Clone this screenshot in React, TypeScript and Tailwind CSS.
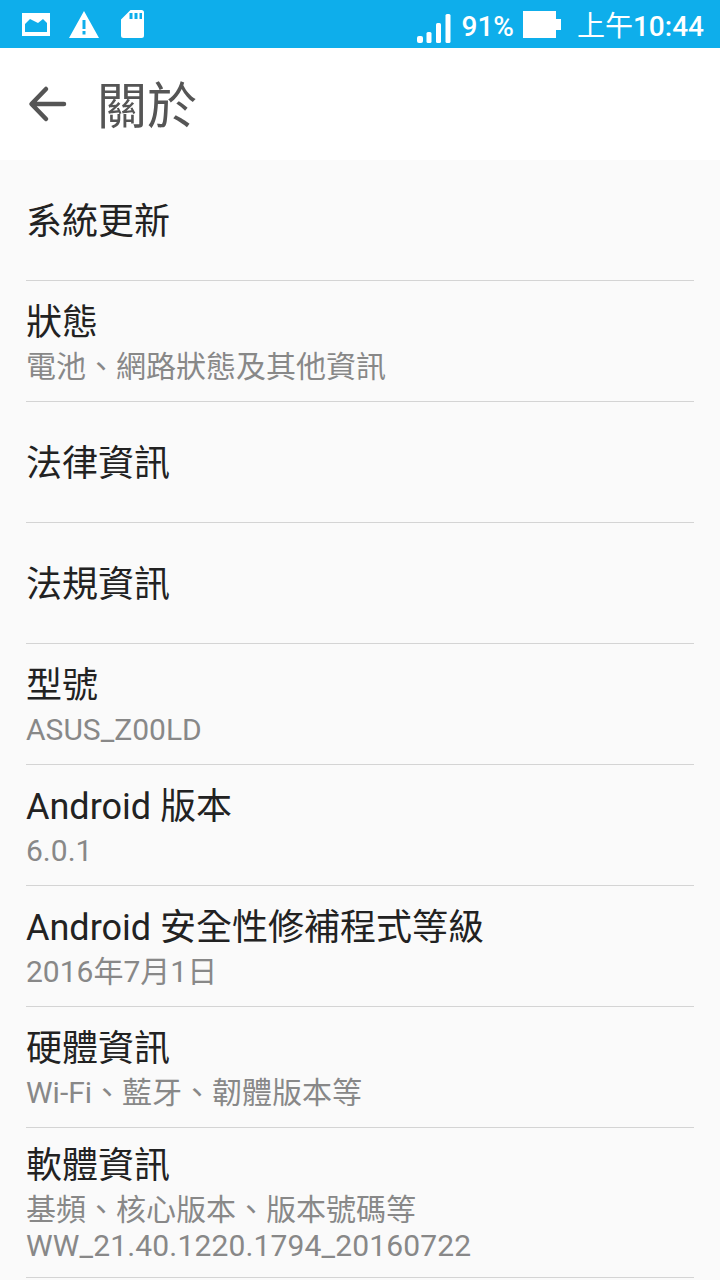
const font = { fontFamily: '"Roboto", "Noto Sans CJK TC", sans-serif' };

const rows = [
  { title: "系統更新" },
  { title: "狀態", sub: ["電池、網路狀態及其他資訊"] },
  { title: "法律資訊" },
  { title: "法規資訊" },
  { title: "型號", sub: ["ASUS_Z00LD"] },
  { title: "Android 版本", sub: ["6.0.1"] },
  { title: "Android 安全性修補程式等級", sub: ["2016年7月1日"] },
  { title: "硬體資訊", sub: ["Wi-Fi、藍牙、韌體版本等"] },
  { title: "軟體資訊", sub: ["基頻、核心版本、版本號碼等", "WW_21.40.1220.1794_20160722"] },
];

function StatusBar() {
  return (
    <div className="flex h-12 items-center justify-between bg-[#0eaeeb] pl-[22px] pr-4 text-white">
      <div className="flex items-center">
        {/* picture */}
        <svg width="28" height="24" viewBox="0 0 28 24" className="block">
          <path fillRule="evenodd" fill="#fff" d="M0 1h28v23H0zM3 20h22v-9l-4-4-5 4-8-4-5 5z" />
        </svg>
        {/* warning */}
        <svg width="30" height="27" viewBox="0 0 30 27" className="ml-[19px] block">
          <path fillRule="evenodd" fill="#fff" d="M15 0 30 27H0zM13.500 9v9h3V9zM13.500 20v3.500h3V20z" />
        </svg>
        {/* sd card */}
        <svg width="23" height="28" viewBox="0 0 23 28" className="ml-[22px] block">
          <path fillRule="evenodd" fill="#fff" d="M9.500 0h11Q23 0 23 2.500v23Q23 28 20.500 28h-18Q0 28 0 25.500V9.500zM8.500 3v6h3V3zM13.500 3v6h3V3zM18.500 3v6h2.500V3z" />
        </svg>
      </div>
      <div className="flex h-12 items-center text-[28px] font-medium leading-none" style={font}>
        <svg width="34" height="30" viewBox="0 0 34 30" className="mr-[10px] mt-[9px] block">
          <rect x="0" y="22" width="6" height="7" rx="2" fill="#fff" />
          <rect x="9.500" y="18" width="5" height="11" rx="1.500" fill="#fff" />
          <rect x="19" y="9" width="5" height="20" rx="1.500" fill="#fff" />
          <rect x="28.500" y="0" width="5" height="29" rx="1.500" fill="#fff" />
        </svg>
        <span className="mt-[5px]">91%</span>
        <svg width="39" height="27" viewBox="0 0 39 27" className="ml-[9px] mr-[15px] mt-px block">
          <path fill="#fff" d="M0 0h33v8h5v11h-5v8H0z" />
        </svg>
        <span className="mt-[5px] font-normal">上午</span>
        <span className="mt-[5px]">10:44</span>
      </div>
    </div>
  );
}

function Row({ title, sub }: { title: string; sub?: string[] }) {
  const tall = sub && sub.length > 1;
  return (
    <div className="mx-[26px] border-b border-[#d4d4d4]">
      <div className={tall ? "flex min-h-[149px] flex-col pt-4" : sub ? "flex min-h-[120px] flex-col justify-center pt-[7px]" : "flex min-h-[120px] flex-col justify-center pt-1"}>
        <div className="text-[36px] leading-[44px] text-[#222222]">{title}</div>
        {sub?.map((line, i) => (
          <div
            key={line}
            className={
              tall
                ? i === 0
                  ? "mt-1 text-[30px] leading-[36px] text-[#888888]"
                  : "text-[30px] leading-[36px] tracking-[0.15px] text-[#888888]"
                : "mt-px text-[30px] leading-[42px] text-[#888888]"
            }
          >
            {line}
          </div>
        ))}
      </div>
    </div>
  );
}

export default function App() {
  return (
    <div className="h-[1280px] w-[720px] overflow-hidden bg-[#fafafa]" style={font}>
      <StatusBar />
      <div className="flex h-28 items-center bg-white pl-7">
        <svg width="40" height="40" viewBox="0 0 40 40" className="block">
          <path d="M36 20H4M18 5 3.500 20 18 35" fill="none" stroke="#555" strokeWidth="4.500" strokeLinecap="round" strokeLinejoin="round" />
        </svg>
        <div className="ml-[29px] mt-[5px] text-[50px] leading-none text-[#555555]">關於</div>
      </div>
      {rows.map((r) => (
        <Row key={r.title} title={r.title} sub={r.sub} />
      ))}
    </div>
  );
}
